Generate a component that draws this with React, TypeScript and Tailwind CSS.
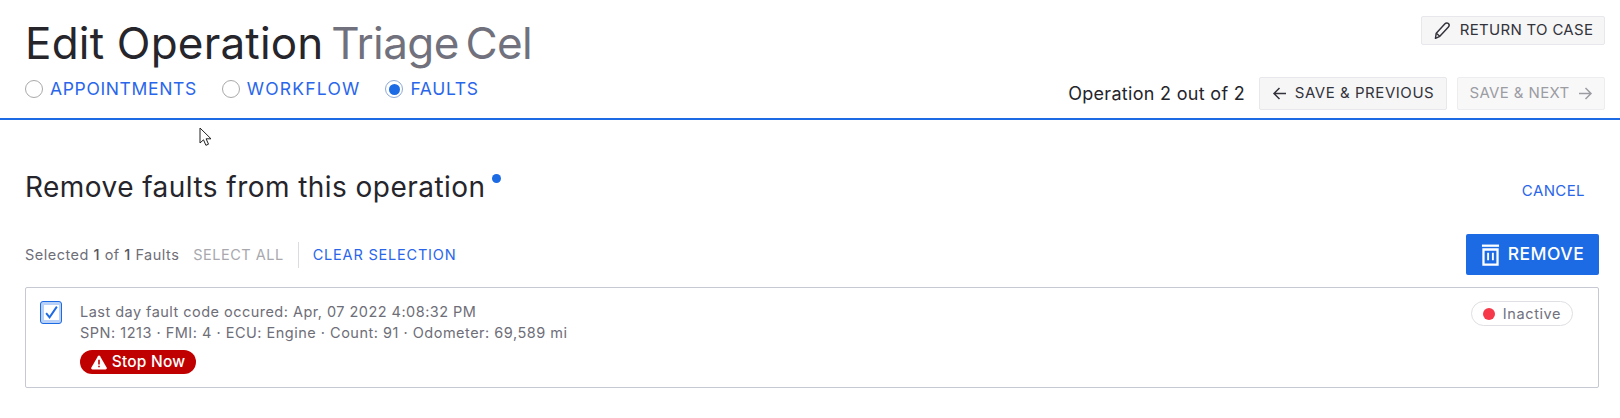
const font = { fontFamily: '"Inter", "Liberation Sans", sans-serif' };

function PencilIcon() {
  return (
    <svg width="19" height="19" viewBox="0 0 17 17" fill="none" stroke="#33333b" strokeWidth="1.3" strokeLinejoin="round">
      <path d="M2.200 15.500l.7-4.600 7.800-8.500c.9-.9 2.300-.9 3.100-.1.800.8.800 2.100 0 3l-7.700 8.400L2.200 15.500z" />
      <path d="M2.900 10.900l3.200 2.800" />
    </svg>
  );
}

function ArrowIcon({ flip, color }: { flip?: boolean; color: string }) {
  return (
    <svg width="15" height="15" viewBox="0 0 15 15" fill="none" stroke={color} strokeWidth="1.5" className={flip ? "rotate-180" : ""}>
      <path d="M14 7.500H2M7.500 2L2 7.500 7.500 13" />
    </svg>
  );
}

function TrashIcon() {
  return (
    <svg width="19" height="24" viewBox="0 0 20 24" fill="none" stroke="#fff" strokeWidth="2.4">
      <path d="M1 2.200h18" />
      <path d="M2.600 6.200h14.800v16H2.600z" />
      <path d="M7.500 9.500v8M12.500 9.500v8" strokeWidth="2" />
    </svg>
  );
}

function WarnIcon() {
  return (
    <svg width="16" height="15" viewBox="0 0 16 15">
      <path d="M8 .6c.5 0 .8.2 1.100.7l6.500 11.300c.5.900 0 1.800-1 1.800H1.400c-1 0-1.500-.9-1-1.800L6.900 1.300C7.200.8 7.500.6 8 .6z" fill="#fff" />
      <path d="M7.200 4.800h1.600v4.700H7.200zM7.200 10.700h1.600v1.600H7.200z" fill="#c00000" />
    </svg>
  );
}

function Radio({ label, checked, className }: { label: string; checked?: boolean; className: string }) {
  return (
    <label className="flex items-center gap-[7px]">
      <span className={`flex h-[18px] w-[18px] items-center justify-center rounded-full border bg-white ${checked ? "border-[#8fa9d6]" : "border-[#a9a9a9]"}`}>
        {checked && <span className="h-[11px] w-[11px] rounded-full bg-[#1c6ae4]" />}
      </span>
      <span className={`text-[17.5px] leading-none text-[#2a66ea] ${className}`}>{label}</span>
    </label>
  );
}

export default function App() {
  return (
    <div className="relative h-[418px] w-[1620px] overflow-hidden bg-white" style={font}>
      <header className="flex h-[120px] justify-between border-b-2 border-[#1c6ae4] pl-[25px] pr-[15px]">
        <div className="pt-[14px]">
          <h1 className="text-[44px] leading-[58px] tracking-[0.2px] text-[#25252b]">
            Edit Operation <span className="-ml-[5px] tracking-[-0.6px] text-[#71717d] [word-spacing:-5px]">Triage Cel</span>
          </h1>
          <div className="mt-[8px] flex gap-[25px]">
            <Radio label="APPOINTMENTS" className="tracking-[0.65px]" />
            <Radio label="WORKFLOW" className="tracking-[1.2px]" />
            <Radio label="FAULTS" className="tracking-[0.65px]" checked />
          </div>
        </div>
        <div className="flex flex-col items-end pt-[16px]">
          <button className="flex h-[29px] w-[184px] items-center justify-center gap-[8px] rounded-[2px] border border-[#e8e8ec] bg-[#f6f6f7] text-[15px] tracking-[0.3px] text-[#33333b]">
            <PencilIcon />
            RETURN TO CASE
          </button>
          <div className="mt-[32px] flex items-center">
            <span className="mr-[14px] text-[18px] tracking-[0.3px] text-[#25252b]">Operation 2 out of 2</span>
            <button className="mr-[10px] flex h-[33px] w-[188px] items-center justify-center gap-[8px] rounded-[2px] border border-[#e8e8ec] bg-[#f6f6f7] text-[15px] tracking-[0.55px] text-[#33333b]">
              <ArrowIcon color="#33333b" />
              SAVE &amp; PREVIOUS
            </button>
            <button className="flex h-[33px] w-[148px] items-center justify-center gap-[8px] rounded-[2px] border border-[#ededf0] bg-[#f8f8f9] text-[15px] tracking-[0.38px] text-[#9c9ca3]">
              SAVE &amp; NEXT
              <ArrowIcon color="#9c9ca3" flip />
            </button>
          </div>
        </div>
      </header>

      <main className="pl-[25px] pr-[21px]">
        <div className="flex h-[114px] items-start justify-between">
          <div className="flex pt-[49px]">
            <h2 className="text-[28px] leading-[36px] tracking-[0.45px] text-[#25252b]">Remove faults from this operation</h2>
            <span className="ml-[7px] mt-[5px] h-[9px] w-[9px] rounded-full bg-[#1c6ae4]" />
          </div>
          <a className="mr-[14px] mt-[62px] text-[15px] leading-[18px] tracking-[0.4px] text-[#2a66ea]">CANCEL</a>
        </div>

        <div className="flex h-[41px] items-center justify-between">
          <div className="flex items-center pt-[1px] text-[14.5px]">
            <span className="tracking-[0.5px] text-[#6e6e78]">
              Selected <span className="font-medium text-[#55555e]">1</span> of <span className="font-medium text-[#55555e]">1</span> Faults
            </span>
            <span className="ml-[14px] tracking-[0.5px] text-[#a8a8ae]">SELECT ALL</span>
            <span className="mx-[14px] h-[26px] w-px bg-[#dcdce0]" />
            <span className="tracking-[0.8px] text-[#2a66ea]">CLEAR SELECTION</span>
          </div>
          <button className="flex h-[41px] w-[133px] items-center justify-center gap-[8px] rounded-[2px] bg-[#1c6ae4] text-[17.5px] font-medium tracking-[0.5px] text-white">
            <TrashIcon />
            REMOVE
          </button>
        </div>

        <div className="mt-[12px] flex h-[101px] justify-between rounded-[2px] border border-[#c6c9d2] pl-[14px] pr-[25px] pt-[13px]">
          <div className="flex">
            <span className="flex h-[23px] w-[22px] items-center justify-center rounded-[3px] border-[1.5px] border-[#1c6ae4] bg-[#b9d0f7]">
              <svg width="15" height="15" viewBox="0 0 14 14" fill="none" stroke="#1c6ae4" strokeWidth="1.8" className="bg-white">
                <path d="M2 7.500l3.200 4L12 1.500" />
              </svg>
            </span>
            <div className="ml-[18px]">
              <p className="text-[14.5px] leading-[21px] tracking-[0.47px] text-[#6e6e78]">Last day fault code occured: Apr, 07 2022 4:08:32 PM</p>
              <p className="text-[14.5px] leading-[21px] tracking-[0.5px] text-[#6e6e78]">SPN: 1213 · FMI: 4 · ECU: Engine · Count: 91 · Odometer: 69,589 mi</p>
              <span className="mt-[7px] flex h-[24px] w-[116px] items-center justify-center gap-[5px] rounded-full bg-[#c00000] text-[15.5px] font-medium tracking-[0.2px] text-white">
                <WarnIcon />
                Stop Now
              </span>
            </div>
          </div>
          <span className="flex h-[25px] w-[102px] items-center justify-center gap-[8px] rounded-full border border-[#e0e0e4] text-[14.5px] tracking-[0.6px] text-[#71717d]">
            <span className="h-[12px] w-[12px] rounded-full bg-[#f5394a]" />
            Inactive
          </span>
        </div>
      </main>

      <svg width="14" height="20" viewBox="0 0 14 20" className="absolute left-[199px] top-[127px]" fill="#fff" stroke="#222" strokeWidth="1">
        <path d="M1 1v15l3.500-3.200 2.400 5.500 2.600-1.100-2.400-5.400H12z" />
      </svg>
    </div>
  );
}
